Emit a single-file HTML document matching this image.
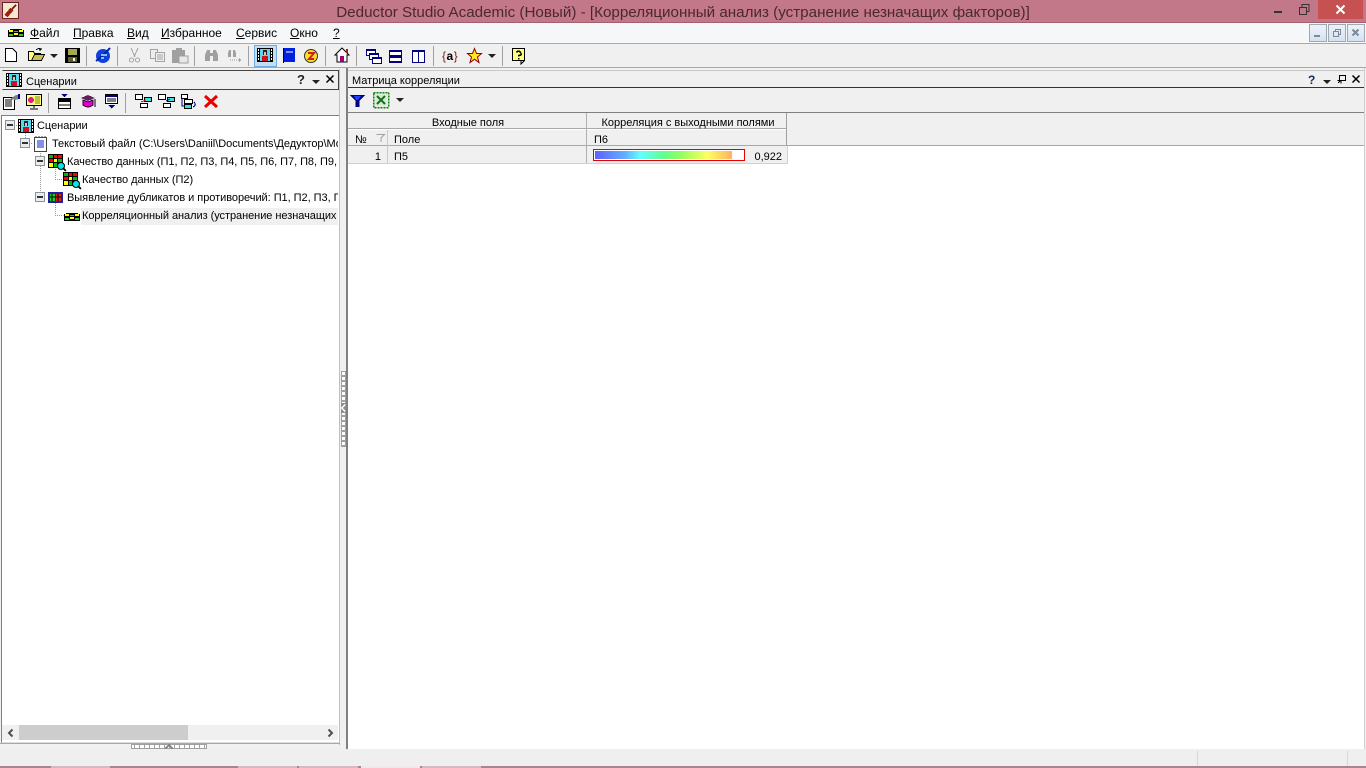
<!DOCTYPE html>
<html><head><meta charset="utf-8">
<style>
html,body{margin:0;padding:0;width:1366px;height:768px;overflow:hidden;background:#f0f0f0;font-family:"Liberation Sans","DejaVu Sans",sans-serif;font-size:11px;color:#000}
.a{position:absolute}
.t{position:absolute;white-space:nowrap;line-height:14px;height:14px}
svg{position:absolute;overflow:visible;shape-rendering:crispEdges}
u{text-decoration:underline}
.sep{position:absolute;width:1px;height:20px;background:#a0a0a0}
</style></head><body>
<svg width="0" height="0" style="position:absolute"><defs>
<g id="film"><rect x="0" y="0" width="16" height="14" fill="#000"/><rect x="3" y="1" width="10" height="12" fill="#58d8f0"/><rect x="1" y="1" width="1" height="2" fill="#fff"/><rect x="1" y="4" width="1" height="2" fill="#fff"/><rect x="1" y="7" width="1" height="2" fill="#fff"/><rect x="1" y="10" width="1" height="2" fill="#fff"/><rect x="14" y="1" width="1" height="2" fill="#fff"/><rect x="14" y="4" width="1" height="2" fill="#fff"/><rect x="14" y="7" width="1" height="2" fill="#fff"/><rect x="14" y="10" width="1" height="2" fill="#fff"/><rect x="6" y="2" width="4" height="5" fill="#222"/><rect x="7" y="4" width="2" height="3" fill="#e8c0a0"/><rect x="5" y="8" width="6" height="5" fill="#d01020"/></g>
<g id="mat"><rect x="0" y="0" width="15" height="14" fill="#000"/><rect x="1" y="1" width="4" height="3" fill="#0b0"/><rect x="6" y="1" width="3" height="3" fill="#f00"/><rect x="10" y="1" width="4" height="3" fill="#f00"/><rect x="1" y="5" width="4" height="3" fill="#f00"/><rect x="6" y="5" width="3" height="3" fill="#ff0"/><rect x="10" y="5" width="4" height="3" fill="#0b0"/><rect x="1" y="9" width="4" height="4" fill="#ff0"/><rect x="6" y="9" width="3" height="4" fill="#0b0"/><circle cx="13" cy="12" r="3.500" fill="#00e8e8" stroke="#000" shape-rendering="auto"/><path d="M15 14l3 3" stroke="#000" stroke-width="2"/></g>
<g id="corr"><rect x="0" y="0" width="16" height="8" fill="#000"/><rect x="0" y="0" width="2" height="1" fill="#fff"/><rect x="14" y="0" width="2" height="1" fill="#fff"/><rect x="1" y="1" width="4" height="2" fill="#ff0"/><rect x="6" y="2" width="4" height="1" fill="#28c828"/><rect x="11" y="1" width="4" height="2" fill="#ff0"/><rect x="1" y="5" width="4" height="2" fill="#28c828"/><rect x="6" y="4" width="4" height="2" fill="#ff0"/><rect x="11" y="5" width="4" height="2" fill="#28c828"/></g>
<g id="exp"><rect x="0.500" y="0.500" width="9" height="9" fill="#ececec" stroke="#8a929a"/><rect x="2" y="4" width="6" height="2" fill="#333"/></g>
<g id="tri"><path d="M0 0h8l-4 4z" fill="#222" shape-rendering="auto"/></g>
<g id="tree"><rect x="0.500" y="0.500" width="7" height="5" fill="#fff" stroke="#000"/><rect x="9.500" y="3.500" width="7" height="4" fill="#40e0e0" stroke="#000"/><rect x="5.500" y="9.500" width="7" height="4" fill="#fff" stroke="#000"/></g>
</defs></svg>

<!-- title bar -->
<div class="a" style="left:0;top:0;width:1366px;height:22px;background:#c27889"></div>
<div class="a" style="left:0;top:22px;width:1366px;height:1px;background:#a5606f"></div>
<div class="a" style="left:2px;top:2px;width:15px;height:15px;background:#f6e8d0;border:1px solid #702020"></div>
<svg style="left:3px;top:3px" width="15" height="15"><path d="M3 13l6-7" stroke="#a02010" stroke-width="4"/><path d="M9 6l4-4" stroke="#602010" stroke-width="2"/></svg>
<div class="t" style="left:0;top:4px;width:1366px;text-align:center;font-size:15.200px;line-height:18px;height:18px;color:#4a2830">Deductor Studio Academic (Новый) - [Корреляционный анализ (устранение незначащих факторов)]</div>
<div class="a" style="left:1274px;top:11px;width:8px;height:2px;background:#333"></div>
<svg style="left:1299px;top:4px" width="11" height="11"><path d="M0.500 3.500h7v7h-7zM3 3V0.500h7v7H8" fill="none" stroke="#333"/></svg>
<div class="a" style="left:1318px;top:0;width:45px;height:19px;background:#c75050"></div>
<svg style="left:1336px;top:5px" width="9" height="9"><path d="M0.500 0.500l8 8M8.500 0.500l-8 8" stroke="#fff" stroke-width="2" shape-rendering="auto"/></svg>

<!-- menu bar -->
<div class="a" style="left:0;top:23px;width:1366px;height:19px;background:#f6f7f9"></div>
<div class="a" style="left:0;top:42px;width:1366px;height:1px;background:#fbfbfb"></div>
<div class="a" style="left:0;top:43px;width:1366px;height:1px;background:#a8a8a8"></div>
<svg style="left:8px;top:29px" width="16" height="8"><use href="#corr"/></svg>
<div class="t" style="left:30px;top:26px;font-size:12px"><u>Ф</u>айл</div>
<div class="t" style="left:73px;top:26px;font-size:12px"><u>П</u>равка</div>
<div class="t" style="left:127px;top:26px;font-size:12px"><u>В</u>ид</div>
<div class="t" style="left:161px;top:26px;font-size:12px"><u>И</u>збранное</div>
<div class="t" style="left:236px;top:26px;font-size:12px"><u>С</u>ервис</div>
<div class="t" style="left:290px;top:26px;font-size:12px"><u>О</u>кно</div>
<div class="t" style="left:333px;top:26px;font-size:12px"><u>?</u></div>
<!-- MDI buttons -->
<div class="a" style="left:1309px;top:24px;width:16px;height:16px;border:1px solid #a0a8b0;background:linear-gradient(#eef3f9,#d4e2f2)"></div>
<div class="a" style="left:1314px;top:35px;width:6px;height:2px;background:#7a8a98"></div>
<div class="a" style="left:1328px;top:24px;width:16px;height:16px;border:1px solid #a0a8b0;background:linear-gradient(#eef3f9,#d4e2f2)"></div>
<svg style="left:1333px;top:29px" width="8" height="8"><path d="M0.500 2.500h5v5h-5zM2.500 2V0.500h5v5H6" fill="none" stroke="#7a8a98"/></svg>
<div class="a" style="left:1347px;top:24px;width:16px;height:16px;border:1px solid #a0a8b0;background:linear-gradient(#eef3f9,#d4e2f2)"></div>
<svg style="left:1352px;top:29px" width="8" height="8"><path d="M0.500 0.500l6 6M6.500 0.500l-6 6" stroke="#7a8a98" stroke-width="2" shape-rendering="auto"/></svg>

<!-- main toolbar -->
<div class="a" style="left:0;top:67px;width:1366px;height:1px;background:#a8a8a8"></div>
<svg style="left:5px;top:48px" width="13" height="15"><path d="M0.500 0.500h7l4 4v9h-11z" fill="#fff" stroke="#000"/></svg>
<svg style="left:28px;top:47px" width="17" height="15"><path d="M0.500 4.500h5l1 2h6v7h-12z" fill="#ffff80" stroke="#000"/><path d="M3.500 13.500l3-6h10l-3 6z" fill="#c8c050" stroke="#000"/><path d="M8 3q3-3 5 0M13 3l-2 0M13 3v-2" stroke="#000" fill="none"/></svg>
<svg style="left:50px;top:54px" width="8" height="4"><use href="#tri"/></svg>
<svg style="left:65px;top:48px" width="15" height="15"><rect x="0" y="0" width="15" height="15" fill="#000"/><rect x="3" y="1" width="9" height="6" fill="#a8a850"/><rect x="3" y="9" width="9" height="5" fill="#606020"/><rect x="8" y="10" width="2" height="3" fill="#eee"/></svg>
<div class="sep" style="left:86px;top:46px"></div>
<svg style="left:95px;top:47px" width="16" height="17"><ellipse cx="8" cy="9" rx="7" ry="7" fill="#1040e0" shape-rendering="auto"/><path d="M1 14Q9 8 15 1" stroke="#0020a0" stroke-width="2" fill="none" shape-rendering="auto"/><rect x="6" y="7" width="6" height="2" fill="#80c0ff"/><rect x="6" y="10" width="3" height="2" fill="#80c0ff"/></svg>
<div class="sep" style="left:117px;top:46px"></div>
<svg style="left:129px;top:48px" width="11" height="15"><path d="M2 0l4 9M9 0l-4 9" stroke="#a4a4a4" fill="none"/><circle cx="2.500" cy="12" r="2" fill="none" stroke="#a4a4a4"/><circle cx="8.500" cy="12" r="2" fill="none" stroke="#a4a4a4"/></svg>
<svg style="left:150px;top:49px" width="16" height="13"><path d="M0.500 0.500h7v9h-7z" fill="#eee" stroke="#a4a4a4"/><path d="M5.500 3.500h9v9h-9z" fill="#eee" stroke="#a4a4a4"/><path d="M7 6h6M7 8h6M7 10h6" stroke="#a4a4a4"/></svg>
<svg style="left:172px;top:48px" width="16" height="15"><rect x="0" y="2" width="13" height="13" fill="#a0a0a0"/><rect x="4" y="0" width="6" height="3" fill="#a0a0a0"/><rect x="7" y="8" width="9" height="7" fill="#e8e8e8" stroke="#a0a0a0"/></svg>
<div class="sep" style="left:194px;top:46px"></div>
<svg style="left:204px;top:49px" width="15" height="13"><path d="M1 12V6l2-5h3v11zM9 12V1h3l2 5v6z" fill="#a0a0a0"/><rect x="6" y="4" width="3" height="3" fill="#a0a0a0"/></svg>
<svg style="left:227px;top:49px" width="15" height="14"><path d="M1 8V4l1-3h2v7zM6 8V1h2l1 3v4z" fill="#a0a0a0"/><path d="M3 11h9" stroke="#a0a0a0" stroke-dasharray="1 1"/><path d="M12 9l2 2-2 2z" fill="#a0a0a0"/></svg>
<div class="sep" style="left:248px;top:46px"></div>
<div class="a" style="left:254px;top:45px;width:21px;height:20px;background:#c2def5;border:1px solid #6caadf"></div>
<svg style="left:257px;top:48px" width="16" height="14"><use href="#film"/></svg>
<svg style="left:283px;top:48px" width="12" height="15"><rect x="0" y="0" width="12" height="14" fill="#0020e0"/><rect x="0" y="0" width="1" height="15" fill="#000"/><rect x="3" y="3" width="7" height="2" fill="#8090ff"/></svg>
<svg style="left:304px;top:49px" width="14" height="14"><circle cx="7" cy="7" r="6.500" fill="#ffe020" stroke="#333" shape-rendering="auto"/><path d="M4 4h6l-5 6h5" stroke="#d02020" stroke-width="2" fill="none" shape-rendering="auto"/></svg>
<div class="sep" style="left:325px;top:46px"></div>
<svg style="left:334px;top:47px" width="16" height="16"><path d="M8 1L1 8h2v7h10V8h2z" fill="#fff" stroke="#000" shape-rendering="auto"/><rect x="6" y="9" width="4" height="6" fill="#a00080"/><rect x="12" y="2" width="2" height="4" fill="#a02020"/></svg>
<div class="sep" style="left:356px;top:46px"></div>
<svg style="left:366px;top:49px" width="16" height="15"><rect x="0.500" y="0.500" width="9" height="6" fill="#fff" stroke="#000080"/><rect x="0" y="0" width="10" height="2" fill="#000080"/><rect x="3.500" y="4.500" width="9" height="6" fill="#fff" stroke="#000080"/><rect x="3" y="4" width="10" height="2" fill="#000080"/><rect x="6.500" y="8.500" width="9" height="6" fill="#fff" stroke="#000080"/><rect x="6" y="8" width="10" height="2" fill="#000080"/></svg>
<svg style="left:389px;top:50px" width="13" height="13"><rect x="0" y="0" width="13" height="13" fill="#000080"/><rect x="1" y="2" width="11" height="3" fill="#fff"/><rect x="1" y="8" width="11" height="3" fill="#fff"/></svg>
<svg style="left:412px;top:50px" width="13" height="13"><rect x="0" y="0" width="13" height="13" fill="#000080"/><rect x="1" y="2" width="5" height="10" fill="#fff"/><rect x="7" y="2" width="5" height="10" fill="#fff"/></svg>
<div class="sep" style="left:433px;top:46px"></div>
<div class="t" style="left:442px;top:49px;font-size:12px;color:#802020;letter-spacing:0.500px">{<span style="color:#000;font-weight:bold">a</span>}</div>
<svg style="left:467px;top:48px" width="15" height="15"><path d="M7.500 0.500l2 5h5l-4 3.500 1.500 5.500-4.500-3.200-4.500 3.200L4.500 9l-4-3.500h5z" fill="#ffe820" stroke="#900000" shape-rendering="auto"/></svg>
<svg style="left:488px;top:54px" width="8" height="4"><use href="#tri"/></svg>
<div class="sep" style="left:502px;top:46px"></div>
<svg style="left:512px;top:48px" width="14" height="16"><rect x="0.500" y="0.500" width="12" height="12" fill="#ffff80" stroke="#000"/><path d="M9 13v3l3-3" fill="#fff" stroke="#000"/><path d="M4.500 4.500q2-3 4 0t-2 3v1M6.500 10v1.500" fill="none" stroke="#000" stroke-width="1.500"/></svg>

<!-- left panel -->
<div class="a" style="left:2px;top:70px;width:335px;height:18px;border:1px solid #444;border-left-color:#e8e8e8"></div>
<svg style="left:6px;top:73px" width="16" height="14"><use href="#film"/></svg>
<div class="t" style="left:26px;top:75px;font-size:11px">Сценарии</div>
<div class="t" style="left:297px;top:73px;font-size:13px;font-weight:bold;color:#222">?</div>
<svg style="left:312px;top:80px" width="8" height="4"><use href="#tri"/></svg>
<svg style="left:326px;top:75px" width="8" height="8"><path d="M0.500 0.500l7 7M7.500 0.500l-7 7" stroke="#000" stroke-width="1.500" shape-rendering="auto"/></svg>

<svg style="left:3px;top:94px" width="17" height="16"><path d="M0.500 3.500h11v12h-11z" fill="#fff" stroke="#000"/><path d="M2 6h7M2 8h7M2 10h7M2 12h7" stroke="#000"/><path d="M7 5l6-4 3 0v4l-4 1z" fill="#808080"/><rect x="15" y="0" width="2" height="5" fill="#000080"/></svg>
<svg style="left:26px;top:94px" width="16" height="16"><rect x="0.500" y="0.500" width="15" height="11" fill="#ffff80" stroke="#000"/><circle cx="5" cy="6" r="3" fill="#e02080"/><path d="M9 3h5M9 5h5M9 7h5M9 9h5" stroke="#808000"/><path d="M8 12v2M4 15h8" stroke="#000"/></svg>
<div class="sep" style="left:48px;top:93px"></div>
<svg style="left:58px;top:94px" width="13" height="15"><path d="M3 0h7l-3.500 3z" fill="#000080"/><rect x="0.500" y="4.500" width="12" height="10" fill="#fff" stroke="#000"/><rect x="1" y="5" width="11" height="3" fill="#000"/><path d="M1 11h11" stroke="#000"/></svg>
<svg style="left:81px;top:95px" width="15" height="14"><path d="M7 0l7 3-7 3-7-3z" fill="#602060"/><path d="M2 5v5q5 4 10 0V5l-5 2z" fill="#e000d0" stroke="#300030"/><path d="M14 4v8" stroke="#000"/></svg>
<svg style="left:105px;top:94px" width="13" height="15"><rect x="0.500" y="0.500" width="12" height="9" fill="#fff" stroke="#000"/><rect x="1" y="1" width="11" height="2" fill="#000080"/><path d="M2 5h9M2 7h9" stroke="#000"/><path d="M3 11h7l-3.500 3.500z" fill="#000080"/></svg>
<div class="sep" style="left:125px;top:93px"></div>
<svg style="left:135px;top:94px" width="17" height="15"><use href="#tree"/><path d="M6 8l5-2" stroke="#e00000"/></svg>
<svg style="left:158px;top:94px" width="17" height="15"><use href="#tree"/><path d="M8 7l4-2" stroke="#000080"/></svg>
<svg style="left:181px;top:94px" width="15" height="15"><rect x="0.500" y="0.500" width="6" height="4" fill="#fff" stroke="#000"/><rect x="3.500" y="5.500" width="8" height="4" fill="#fff" stroke="#000"/><rect x="3.500" y="10.500" width="7" height="4" fill="#40e0e0" stroke="#000"/><path d="M1 4v8h2M13 8q3 3-1 5" fill="none" stroke="#000080"/></svg>
<svg style="left:204px;top:95px" width="15" height="14"><path d="M1 1l12 11M13 1L1 12" stroke="#e80000" stroke-width="3" shape-rendering="auto"/></svg>

<!-- tree -->
<div class="a" style="left:1px;top:115px;width:337px;height:626px;background:#fff;border-left:1px solid #808080;border-top:1px solid #808080;border-bottom:1px solid #ddd;border-right:1px solid #ddd;overflow:hidden"></div>
<svg style="left:0;top:0;pointer-events:none" width="340" height="230"><g stroke="#999" stroke-dasharray="1 1" fill="none"><path d="M10.500 130v-4M14 125.500h4M25.500 131v9M29 143.500h4M40.500 149v8M40.500 166v26M55.500 167v12.500h7M55.500 203v12.500h8"/></g></svg>
<svg style="left:5px;top:120px" width="10" height="10"><use href="#exp"/></svg>
<svg style="left:18px;top:119px" width="16" height="14"><use href="#film"/></svg>
<div class="t" style="left:37px;top:119px;letter-spacing:-0.020px">Сценарии</div>
<svg style="left:20px;top:138px" width="10" height="10"><use href="#exp"/></svg>
<svg style="left:34px;top:136px" width="14" height="16"><rect x="0.500" y="1.500" width="12" height="14" fill="#fff" stroke="#444"/><path d="M3 5h7M3 7h7M3 9h7M3 11h7" stroke="#0020e0"/><path d="M2 0v2M5 0v2M8 0v2M11 0v2" stroke="#444"/></svg>
<div class="t" style="left:52px;top:137px;width:286px;overflow:hidden;letter-spacing:-0.040px">Текстовый файл (C:\Users\Daniil\Documents\Дедуктор\Мои данные\Данные.txt)</div>
<svg style="left:35px;top:156px" width="10" height="10"><use href="#exp"/></svg>
<svg style="left:48px;top:154px" width="16" height="14"><use href="#mat"/></svg>
<div class="t" style="left:67px;top:155px;width:271px;overflow:hidden;letter-spacing:-0.050px">Качество данных (П1, П2, П3, П4, П5, П6, П7, П8, П9, П10)</div>
<svg style="left:63px;top:172px" width="16" height="14"><use href="#mat"/></svg>
<div class="t" style="left:82px;top:173px;letter-spacing:-0.050px">Качество данных (П2)</div>
<svg style="left:35px;top:192px" width="10" height="10"><use href="#exp"/></svg>
<svg style="left:48px;top:192px" width="15" height="11"><rect x="0" y="0" width="15" height="11" fill="#2020a0"/><rect x="2" y="2" width="5" height="7" fill="#20d020"/><rect x="8" y="2" width="5" height="7" fill="#e02020"/><path d="M4 2v7M10 2v7M2 5h11" stroke="#000"/></svg>
<div class="t" style="left:67px;top:191px;width:271px;overflow:hidden;letter-spacing:-0.040px">Выявление дубликатов и противоречий: П1, П2, П3, П4, П5</div>
<div class="a" style="left:81px;top:208px;width:257px;height:17px;background:#f0f0f0"></div>
<svg style="left:64px;top:213px" width="16" height="8"><use href="#corr"/></svg>
<div class="t" style="left:82px;top:209px;width:255px;overflow:hidden;letter-spacing:-0.050px">Корреляционный анализ (устранение незначащих факторов)</div>

<!-- left scrollbar -->
<div class="a" style="left:2px;top:725px;width:336px;height:15px;background:#f0f0f0"></div>
<div class="a" style="left:19px;top:725px;width:169px;height:15px;background:#cdcdcd"></div>
<svg style="left:7px;top:729px" width="7" height="8"><path d="M5.500 0.500L2 4l3.500 3.500" fill="none" stroke="#505050" stroke-width="2" shape-rendering="auto"/></svg>
<svg style="left:327px;top:729px" width="7" height="8"><path d="M1.500 0.500L5 4 1.500 7.500" fill="none" stroke="#505050" stroke-width="2" shape-rendering="auto"/></svg>
<div class="a" style="left:339px;top:69px;width:1px;height:676px;background:#c0c0c0"></div>
<div class="a" style="left:0;top:743px;width:340px;height:1px;background:#a8a8a8"></div>
<div class="a" style="left:131px;top:744px;width:76px;height:5px;border:1px solid #a0a0a0;box-sizing:border-box;background:repeating-linear-gradient(90deg,#fff 0 2px,#a0a0a0 2px 3px,#fff 3px 5px)"></div>
<svg style="left:165px;top:744px" width="8" height="5"><path d="M0 5l4-4 4 4" fill="none" stroke="#808080" stroke-width="2"/></svg>

<!-- splitter -->
<div class="a" style="left:346px;top:68px;width:2px;height:681px;background:#808080"></div>
<div class="a" style="left:341px;top:371px;width:3px;height:74px;background:repeating-linear-gradient(180deg,#fff 0 3px,#a0a0a0 3px 5px);border:1px solid #a0a0a0"></div>
<div class="a" style="left:341px;top:403px;width:5px;height:10px;background:#909090"></div>
<svg style="left:341px;top:404px" width="5" height="8"><path d="M4 0.500L1 4l3 3.500" fill="none" stroke="#fff" stroke-width="1.500"/></svg>

<!-- right panel header -->
<div class="a" style="left:348px;top:70px;width:1016px;height:1px;background:#c8c8c8"></div>
<div class="a" style="left:348px;top:87px;width:1016px;height:1px;background:#333"></div>
<div class="t" style="left:352px;top:74px;font-size:11px">Матрица корреляции</div>
<div class="t" style="left:1308px;top:73px;font-size:12px;font-weight:bold;color:#103060">?</div>
<svg style="left:1323px;top:80px" width="8" height="4"><use href="#tri"/></svg>
<svg style="left:1337px;top:75px" width="9" height="9"><path d="M2.500 0.500h6v5h-6zM3 5.500H0.500M4 6v2.500M3 6l-2 2" fill="none" stroke="#000"/></svg>
<svg style="left:1352px;top:75px" width="8" height="8"><path d="M0.500 0.500l7 7M7.500 0.500l-7 7" stroke="#000" stroke-width="1.500" shape-rendering="auto"/></svg>

<!-- right toolbar -->
<svg style="left:350px;top:95px" width="15" height="12"><path d="M0 0h15L9.500 6v6h-4V6z" fill="#000080"/><path d="M4 1h7l-3 4H6z" fill="#2040ff"/></svg>
<svg style="left:373px;top:92px" width="16" height="16"><rect x="0.500" y="0.500" width="15" height="15" fill="#e0ece0" stroke="#108010" stroke-width="1.500" stroke-dasharray="2 1"/><rect x="3" y="3" width="10" height="10" fill="#d8e8d8"/><path d="M4 4l8 8M12 4l-8 8" stroke="#107010" stroke-width="2" shape-rendering="auto"/></svg>
<svg style="left:396px;top:98px" width="8" height="4"><use href="#tri"/></svg>

<!-- right content -->
<div class="a" style="left:348px;top:112px;width:1016px;height:637px;background:#fff"></div>
<div class="a" style="left:348px;top:112px;width:1016px;height:1px;background:#808080"></div>
<div class="a" style="left:1364px;top:68px;width:1px;height:681px;background:#d0d0d0"></div>
<div class="a" style="left:348px;top:113px;width:1016px;height:32px;background:#f0f0f0"></div>
<div class="a" style="left:348px;top:146px;width:439px;height:17px;background:#f0f0f0"></div>
<div class="a" style="left:348px;top:128px;width:439px;height:1px;background:#a8a8a8"></div>
<div class="a" style="left:348px;top:129px;width:439px;height:1px;background:#fff"></div>
<div class="a" style="left:348px;top:145px;width:1016px;height:1px;background:#a8a8a8"></div>
<div class="a" style="left:348px;top:163px;width:440px;height:1px;background:#d0d0d0"></div>
<div class="a" style="left:586px;top:113px;width:1px;height:50px;background:#b0b0b0"></div>
<div class="a" style="left:786px;top:113px;width:1px;height:32px;background:#a0a0a0"></div>
<div class="a" style="left:787px;top:146px;width:1px;height:18px;background:#d0d0d0"></div>
<div class="a" style="left:387px;top:130px;width:1px;height:33px;background:#c8c8c8"></div>
<div class="t" style="left:349px;top:116px;width:238px;text-align:center">Входные поля</div>
<div class="t" style="left:588px;top:116px;width:200px;text-align:center">Корреляция с выходными полями</div>
<div class="t" style="left:355px;top:133px">№</div>
<svg style="left:376px;top:134px" width="9" height="8"><path d="M0.500 0.500h8L5 4v4" fill="none" stroke="#a0a0a0" shape-rendering="auto"/></svg>
<div class="t" style="left:394px;top:133px">Поле</div>
<div class="t" style="left:594px;top:133px">П6</div>
<div class="t" style="left:348px;top:150px;width:33px;text-align:right">1</div>
<div class="t" style="left:394px;top:150px">П5</div>
<div class="a" style="left:593px;top:149px;width:150px;height:10px;background:#fff;border:1px solid #e80000"></div>
<div class="a" style="left:595px;top:151px;width:137px;height:8px;background:linear-gradient(90deg,#6060ff 0%,#60b0ff 22%,#60ffff 33%,#60ff90 50%,#90ff60 62%,#ffff60 82%,#ffb060 100%)"></div>
<div class="t" style="left:745px;top:150px;width:37px;text-align:right">0,922</div>

<!-- status bar -->
<div class="a" style="left:0;top:749px;width:1366px;height:17px;background:#efefef"></div>
<div class="a" style="left:1197px;top:751px;width:1px;height:15px;background:#d8d8d8"></div>
<div class="a" style="left:1347px;top:751px;width:1px;height:15px;background:#d8d8d8"></div>
<div class="a" style="left:0;top:766px;width:1366px;height:2px;background:#aa8490"></div>
<div class="a" style="left:51px;top:766px;width:59px;height:2px;background:#d8b8c0"></div>
<div class="a" style="left:238px;top:766px;width:59px;height:2px;background:#d8b8c0"></div>
<div class="a" style="left:299px;top:766px;width:59px;height:2px;background:#d8b8c0"></div>
<div class="a" style="left:361px;top:766px;width:59px;height:2px;background:#f0e8ea"></div>
<div class="a" style="left:422px;top:766px;width:59px;height:2px;background:#d8b8c0"></div>
</body></html>
